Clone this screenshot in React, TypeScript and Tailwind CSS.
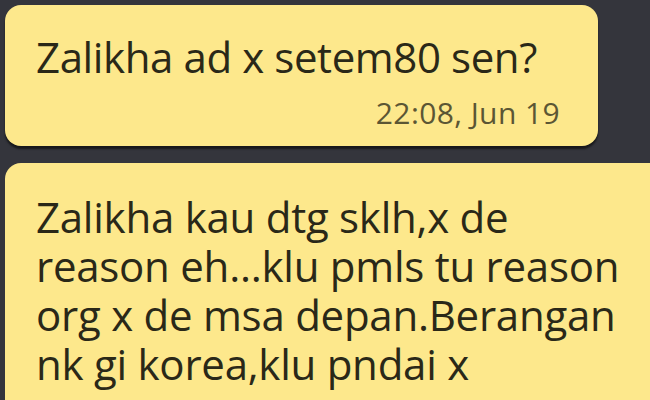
export default function App() {
  return (
    <div className="w-[650px] h-[400px] overflow-hidden bg-[#34353c] pt-[5px] pl-[5px] font-['Open_Sans','Noto_Sans',sans-serif] font-medium text-[#2a2818]">
      <div className="w-[593px] h-[141px] rounded-[16px] bg-[#fde88c] pl-[31px] pr-[38px] pt-[26px] shadow-[0_3px_2px_rgba(0,0,0,0.55)]">
        <p className="whitespace-nowrap text-[42px] leading-[52px] tracking-[-0.4px]">Zalikha ad x setem80 sen?</p>
        <p className="mt-[13px] text-right text-[30px] leading-[34px] tracking-[0.4px] text-[#5b5634]">22:08, Jun 19</p>
      </div>
      <div className="mt-[17px] w-[700px] h-[300px] rounded-[16px] bg-[#fde88c] pl-[31px] pt-[29px]">
        <p className="whitespace-nowrap text-[42px] leading-[49px] tracking-[-0.25px]">
          Zalikha kau dtg sklh,x de
          <br />
          reason eh...klu pmls tu reason
          <br />
          org x de msa depan.Berangan
          <br />
          nk gi korea,klu pndai x
        </p>
      </div>
    </div>
  );
}
